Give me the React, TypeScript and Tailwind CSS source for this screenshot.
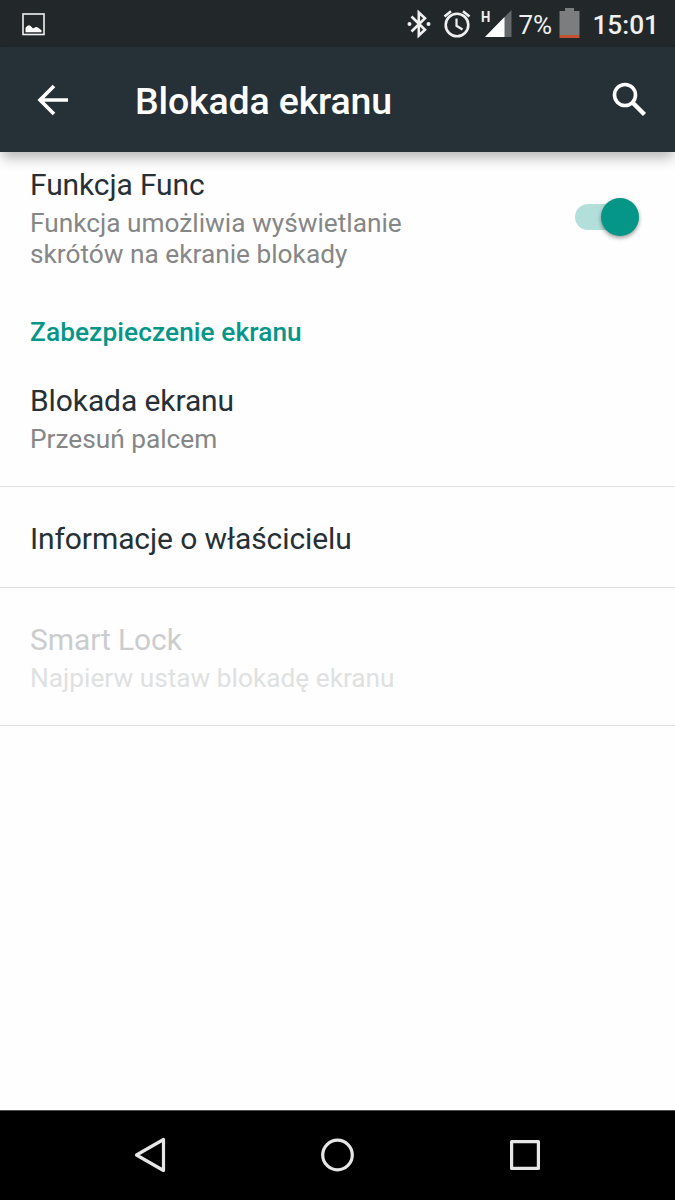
import { useState } from "react";

type RowProps = {
  title: string;
  summary?: string;
  disabled?: boolean;
};

const Row = ({ title, summary, disabled }: RowProps) => (
  <div className={`border-b border-[#dedfdf] px-[30px] pt-[33px] ${summary ? "pb-[31px]" : "pb-[29px]"}`}>
    <div className={`text-[30px] leading-[38px] tracking-[-0.1px] ${disabled ? "text-[#cbcdcd]" : "text-[#263035]"}`}>
      {title}
    </div>
    {summary && (
      <div className={`text-[26.25px] leading-[31px] pt-[4px] ${disabled ? "text-[#dfe1e1]" : "text-[#858686]"}`}>
        {summary}
      </div>
    )}
  </div>
);

const StatusBar = () => (
  <div className="flex h-[47px] items-center bg-[#22272a] pl-[22px] pr-[16px] text-[#f0f0f0]">
    {/* Screenshot notification */}
    <svg width="23" height="24" viewBox="0 0 23 24" fill="none">
      <rect x="1" y="2" width="21" height="20.5" stroke="currentColor" strokeWidth="1.6" />
      <path d="M3.500 20.300v-4.500l2-2q1.700-1.400 3.200.3l2.300 2.400 2.200-1.300q1.500-.8 3 .6l3.300 2.500v2z" fill="white" />
    </svg>

    {/* Bluetooth connected, alarm, signal */}
    <svg className="ml-auto" width="24" height="30" viewBox="0 0 24 30" fill="none">
      <path d="M4.500 7.500 18 20.800 11.800 26.500V3.500L18 9.200 4.500 22.500" stroke="currentColor" strokeWidth="2.600" />
      <circle cx="2.500" cy="15" r="2" fill="currentColor" />
      <circle cx="21.500" cy="15" r="2" fill="currentColor" />
    </svg>
    <svg className="ml-[12px]" width="28" height="30" viewBox="0 0 28 30" fill="none" stroke="currentColor">
      <circle cx="14" cy="16" r="11.300" strokeWidth="2.600" />
      <path d="M13.500 9.500v7.300l6 3.700" strokeWidth="2.200" />
      <path d="M1.500 7.500 8 2.200M20 2.200l6.500 5.300" strokeWidth="2.600" />
    </svg>
    <div className="relative ml-[11px] h-[30px] w-[30px]">
      <span className="absolute -top-px -left-px origin-left scale-x-[0.85] text-[15.5px] font-bold leading-[18px]">H</span>
      <svg width="30" height="28" viewBox="0 0 30 28">
        <path d="M29.500 1v27H3z" fill="#64686a" />
        <path d="M22.500 8v20H3z" fill="white" />
      </svg>
    </div>
    <span className="ml-[6px] w-[34px] whitespace-nowrap pt-[2px] text-[26px] leading-[30px]">7%</span>
    <svg className="mb-[2px] ml-[7px]" width="21" height="32" viewBox="0 0 21 32">
      <path d="M6 1h9v3h5.500v24H.5V4H6z" fill="#7b7d7e" />
      <path d="M.5 28h20v3H.5z" fill="#c4512f" />
    </svg>
    <span className="ml-[12px] pt-[2px] text-[26.25px] font-medium leading-[30px]">15:01</span>
  </div>
);

const AppBar = () => (
  <div className="relative z-10 flex h-[105px] items-center bg-[#263137] pl-[36px] pr-[28px] text-white shadow-[0_8px_12px_-2px_rgba(0,0,0,0.28)]">
    <button>
      <svg width="32" height="32" viewBox="0 0 32 32" fill="none" stroke="currentColor" strokeWidth="3.600">
        <path d="M32 16H4M18 2 4 16l14 14" />
      </svg>
    </button>
    <h1 className="ml-[67px] pt-[3px] text-[37.5px] font-medium leading-[44px] tracking-[-0.15px]">Blokada ekranu</h1>
    <button className="mb-[2px] ml-auto">
      <svg width="36" height="36" viewBox="0 0 36 36" fill="none" stroke="currentColor">
        <circle cx="14" cy="14" r="10.500" strokeWidth="3.600" />
        <path d="m22 22 11.500 11.500" strokeWidth="4.400" />
      </svg>
    </button>
  </div>
);

const NavigationBar = () => (
  <div className="flex h-[90px] items-center border-t border-[#4c5053] bg-black pb-px pl-[134px] pr-[135px] text-[#e6e6e6]">
    <svg width="32" height="36" viewBox="0 0 32 36" fill="none" stroke="currentColor" strokeWidth="3.200" strokeLinejoin="round">
      <path d="M29.500 2.500v31L2.500 18z" />
    </svg>
    <svg className="mx-auto" width="34" height="34" viewBox="0 0 34 34" fill="none" stroke="currentColor" strokeWidth="3.200">
      <circle cx="16.500" cy="17" r="14.800" />
    </svg>
    <svg width="30" height="30" viewBox="0 0 30 30" fill="none" stroke="currentColor" strokeWidth="3.200" strokeLinejoin="round">
      <rect x="1.600" y="1.600" width="26.800" height="26.800" />
    </svg>
  </div>
);

export default function App() {
  const [enabled, setEnabled] = useState(true);

  return (
    <div className="flex h-[1200px] w-[675px] flex-col overflow-hidden bg-[#fefefe] font-[Roboto,sans-serif]">
      <StatusBar />
      <AppBar />

      <main className="flex-1">
        <div className="flex items-start justify-between pl-[30px] pr-[36px] pt-[14px]">
          <div className="w-[400px]">
            <div className="text-[30px] leading-[38px] tracking-[-0.12px] text-[#263035]">Funkcja Func</div>
            <p className="pt-[4px] text-[26.25px] leading-[31px] text-[#858686]">
              Funkcja umożliwia wyświetlanie skrótów na ekranie blokady
            </p>
          </div>
          <button
            role="switch"
            aria-checked={enabled}
            onClick={() => setEnabled(!enabled)}
            className={`mt-[38px] flex h-[26px] w-[64px] items-center rounded-full ${
              enabled ? "justify-end bg-[#b3dfda]" : "justify-start bg-gray-300"
            }`}
          >
            <span
              className={`size-[38px] shrink-0 rounded-full shadow-[0_2px_4px_rgba(0,0,0,0.4)] ${
                enabled ? "bg-[#069688]" : "bg-gray-50"
              }`}
            />
          </button>
        </div>

        <h2 className="px-[30px] pb-px pt-[47px] text-[26.25px] font-medium leading-[31px] tracking-[0.08px] text-[#069688]">
          Zabezpieczenie ekranu
        </h2>
        <Row title="Blokada ekranu" summary="Przesuń palcem" />
        <Row title="Informacje o właścicielu" />
        <Row title="Smart Lock" summary="Najpierw ustaw blokadę ekranu" disabled />
      </main>

      <NavigationBar />
    </div>
  );
}
